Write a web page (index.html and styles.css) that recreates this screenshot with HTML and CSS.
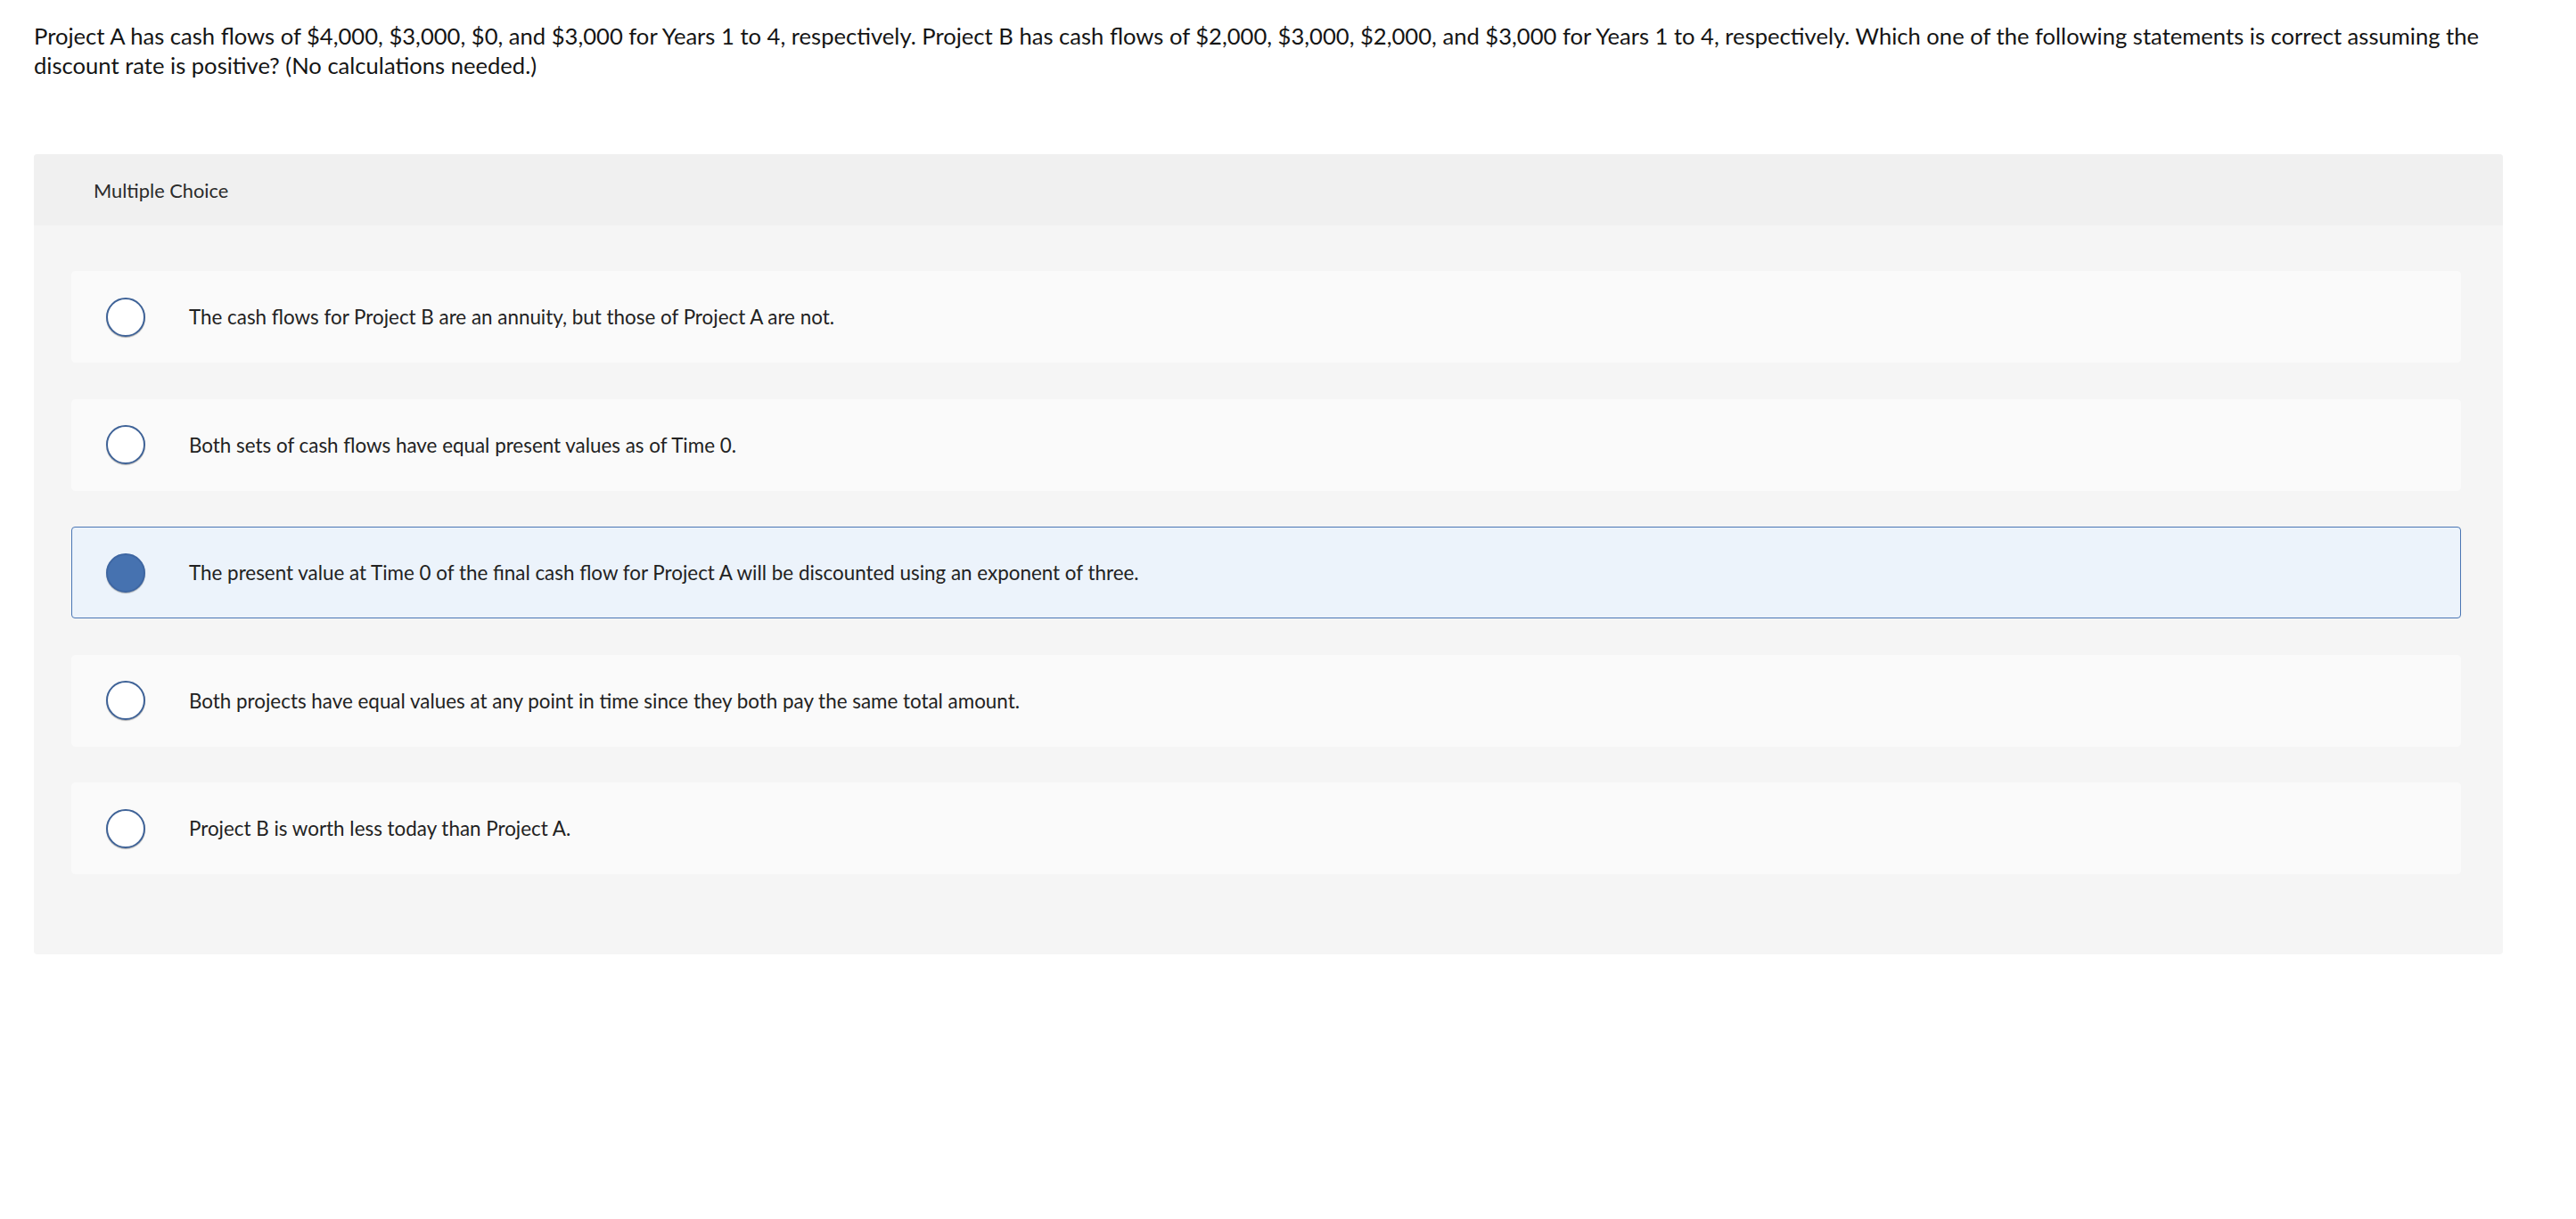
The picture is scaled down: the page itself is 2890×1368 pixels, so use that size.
FILE: index.html
```html
<!DOCTYPE html>
<html lang="en">
<head>
    <meta charset="UTF-8">
    <title>Multiple Choice</title>
    <link rel="stylesheet" href="styles.css">
</head>
<body>
    <div class="page">
        <p class="question">Project A has cash flows of $4,000, $3,000, $0, and $3,000 for Years 1 to 4, respectively. Project B has cash flows of $2,000, $3,000, $2,000, and $3,000 for Years 1 to 4, respectively. Which one of the following statements is correct assuming the discount rate is positive? (No calculations needed.)</p>
        <div class="choice-box">
            <div class="choice-header">Multiple Choice</div>
            <div class="choice-list">
                <label class="option">
                    <input type="radio" name="answer" class="radio">
                    <span class="option-text">The cash flows for Project B are an annuity, but those of Project A are not.</span>
                </label>
                <label class="option">
                    <input type="radio" name="answer" class="radio">
                    <span class="option-text">Both sets of cash flows have equal present values as of Time 0.</span>
                </label>
                <label class="option selected">
                    <input type="radio" name="answer" class="radio" checked>
                    <span class="option-text">The present value at Time 0 of the final cash flow for Project A will be discounted using an exponent of three.</span>
                </label>
                <label class="option">
                    <input type="radio" name="answer" class="radio">
                    <span class="option-text">Both projects have equal values at any point in time since they both pay the same total amount.</span>
                </label>
                <label class="option">
                    <input type="radio" name="answer" class="radio">
                    <span class="option-text">Project B is worth less today than Project A.</span>
                </label>
            </div>
        </div>
    </div>
</body>
</html>
```

FILE: styles.css
```css
body {
    margin: 0;
    font-family: Lato, "Open Sans", sans-serif;
    color: #151515;
    background: #fff;
}
.page {
    padding: 24px 82px 0 38px;
}
.question {
    margin: 0;
    font-size: 25.6px;
    line-height: 33px;
}
.choice-box {
    margin-top: 83px;
    background: #f5f5f5;
    border-radius: 4px;
    overflow: hidden;
}
.choice-header {
    display: flex;
    align-items: center;
    height: 80px;
    padding-left: 67px;
    background: #f0f0f0;
    font-size: 21.8px;
    color: #2b2b2b;
}
.choice-list {
    display: flex;
    flex-direction: column;
    gap: 40.5px;
    padding: 51px 47px 90px 42px;
}
.option {
    display: flex;
    align-items: center;
    height: 103px;
    box-sizing: border-box;
    padding-left: 38px;
    background: #fafafa;
    border: 1px solid #fafafa;
    border-radius: 4px;
    cursor: pointer;
}
.option.selected {
    background: #ecf3fb;
    border-color: #4a76b4;
}
.radio {
    appearance: none;
    -webkit-appearance: none;
    flex: none;
    width: 44px;
    height: 44px;
    margin: 0;
    box-sizing: border-box;
    border: 2px solid #3f6398;
    border-radius: 50%;
    background: #fff;
    box-shadow: 0 1px 1px rgba(0,0,0,0.3);
}
.radio:checked {
    background: #4672b0;
    border-color: #3e66a2;
}
.option-text {
    margin-left: 49px;
    font-size: 22.4px;
    color: #222;
}
```
